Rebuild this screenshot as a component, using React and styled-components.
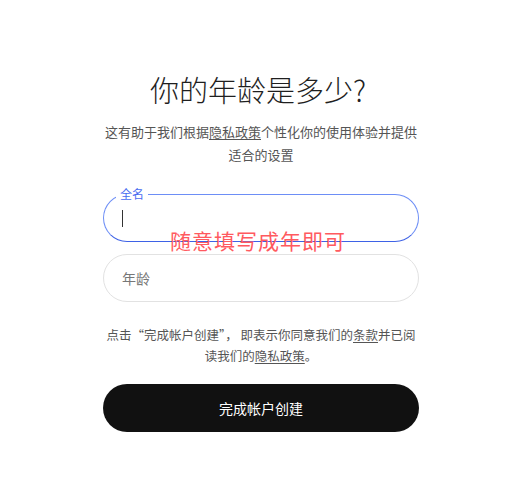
import React from 'react'
import styled, { createGlobalStyle } from 'styled-components'

const GlobalStyle = createGlobalStyle`
  html, body {
    margin: 0;
    padding: 0;
    background: #fff;
  }
  body {
    font-family: 'Noto Sans CJK SC', 'Noto Sans', sans-serif;
  }
`

const Page = styled.div`
  display: flex;
  justify-content: center;
  padding: 68px 0 0 3px;
`

const Column = styled.div`
  width: 316px;
  display: flex;
  flex-direction: column;
  align-items: stretch;
`

const Title = styled.h1`
  margin: 0 6px 0 0;
  font-size: 29px;
  font-weight: 300;
  line-height: 42px;
  color: #1f1f1f;
  text-align: center;
`

const Lead = styled.p`
  margin: 10px 0 0;
  font-size: 13px;
  line-height: 23px;
  color: #555;
  text-align: center;
`

const Link = styled.a`
  color: inherit;
  text-decoration: underline;
  text-underline-offset: 2px;
`

const Fields = styled.div`
  position: relative;
  margin-top: 28px;
  display: flex;
  flex-direction: column;
  gap: 12px;
`

const Field = styled.div`
  position: relative;
  height: 48px;
  box-sizing: border-box;
  border-radius: 24px;
  border: 1px solid ${(p) => (p.$focused ? '#6d8ef6' : '#e2e2e2')};
  border-bottom-color: ${(p) => (p.$focused ? '#3e62e6' : '#e2e2e2')};
  display: flex;
  align-items: center;
  padding-left: 18px;
`

const Label = styled.span`
  position: absolute;
  top: -9px;
  left: 12px;
  padding: 0 4px;
  background: #fff;
  font-size: 12px;
  line-height: 16px;
  color: #4a6cf0;
`

const Caret = styled.span`
  display: block;
  width: 1px;
  height: 17px;
  background: #333;
`

const Placeholder = styled.span`
  font-size: 14px;
  color: #777;
`

const Note = styled.span`
  position: absolute;
  top: 34px;
  left: 67px;
  font-size: 21px;
  letter-spacing: 1px;
  line-height: 24px;
  color: #ff5a5f;
  white-space: nowrap;
  pointer-events: none;
`

const Legal = styled.p`
  margin: 22px 0 0;
  font-size: 12.5px;
  line-height: 21px;
  color: #555;
  text-align: center;
`

const Submit = styled.button`
  margin-top: 18px;
  height: 48px;
  border: none;
  border-radius: 24px;
  background: #111;
  color: #fff;
  font-family: inherit;
  font-size: 14px;
  cursor: pointer;
`

export default function App() {
  return (
    <>
      <GlobalStyle />
      <Page>
        <Column>
          <Title>你的年龄是多少?</Title>
          <Lead>
            这有助于我们根据<Link>隐私政策</Link>个性化你的使用体验并提供适合的设置
          </Lead>
          <Fields>
            <Field $focused>
              <Label>全名</Label>
              <Caret />
            </Field>
            <Field>
              <Placeholder>年龄</Placeholder>
            </Field>
            <Note>随意填写成年即可</Note>
          </Fields>
          <Legal>
            点击“完成帐户创建”， 即表示你同意我们的<Link>条款</Link>并已阅读我们的
            <Link>隐私政策</Link>。
          </Legal>
          <Submit>完成帐户创建</Submit>
        </Column>
      </Page>
    </>
  )
}
